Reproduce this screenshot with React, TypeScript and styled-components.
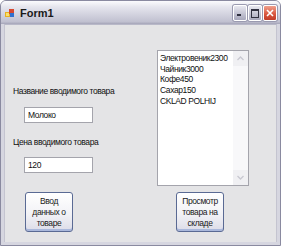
import styled, { createGlobalStyle } from 'styled-components';

const GlobalStyle = createGlobalStyle`
  html, body {
    margin: 0;
    padding: 0;
    background: #ffffff;
  }
  body {
    font-family: "Liberation Sans", Arial, sans-serif;
  }
`;

const Window = styled.div`
  width: 281px;
  height: 246px;
  box-sizing: border-box;
  display: flex;
  flex-direction: column;
  background: #d6d6e0;
  border: 1px solid #8a8aa0;
  border-radius: 6px 6px 0 0;
  overflow: hidden;
`;

const TitleBar = styled.div`
  height: 23px;
  flex: none;
  display: flex;
  align-items: center;
  padding: 0 3px 0 4px;
  background: linear-gradient(
    to bottom,
    #fbfbfd 0%,
    #e6e6ee 25%,
    #d2d2de 60%,
    #c0c0d0 90%,
    #a4a4b8 100%
  );
`;

const Title = styled.span`
  margin-left: 5px;
  font-size: 11px;
  font-weight: bold;
  color: #1a1a1a;
  flex: 1;
`;

const CaptionButtons = styled.div`
  display: flex;
  gap: 1px;
  margin-top: 1px;
`;

const CaptionButton = styled.div<{ $close?: boolean }>`
  width: 14px;
  height: 16px;
  box-sizing: border-box;
  border: 1px solid #ffffff;
  border-radius: 2px;
  display: flex;
  align-items: center;
  justify-content: center;
  background: ${(p) =>
    p.$close
      ? 'linear-gradient(to bottom, #f0a08c, #d8543c 60%, #c03c28)'
      : 'linear-gradient(to bottom, #e8e8f0, #c0c0d0 60%, #a8a8bc)'};
  box-shadow: 0 0 0 1px #9a9ab0;
`;

const Client = styled.div`
  flex: 1;
  display: flex;
  margin: 0 3px 3px 3px;
  background: #e4e4e6;
  border-top: 1px solid #b8b8c8;
  border-left: 1px solid #c4c4d0;
  border-right: 1px solid #c4c4d0;
`;

const LeftColumn = styled.div`
  width: 152px;
  display: flex;
  flex-direction: column;
  align-items: flex-start;
  padding-top: 61px;
`;

const RightColumn = styled.div`
  display: flex;
  flex-direction: column;
  align-items: flex-start;
  padding-top: 25px;
`;

const Label = styled.div<{ $gap: number }>`
  margin-left: 8px;
  margin-top: ${(p) => p.$gap}px;
  font-size: 8.5px;
  line-height: 11px;
  letter-spacing: -0.4px;
  color: #101010;
`;

const TextBox = styled.div<{ $gap: number }>`
  margin-left: 19px;
  margin-top: ${(p) => p.$gap}px;
  width: 69px;
  height: 16px;
  box-sizing: border-box;
  background: #ffffff;
  border: 1px solid #a4a4ac;
  padding: 0 3px;
  font-size: 8.5px;
  line-height: 14px;
  letter-spacing: -0.4px;
  color: #101010;
`;

const PushButton = styled.div<{ $indent: number; $gap: number }>`
  margin-left: ${(p) => p.$indent}px;
  margin-top: ${(p) => p.$gap}px;
  width: 48px;
  height: 40px;
  box-sizing: border-box;
  border: 1px solid #5a6a94;
  border-radius: 3px;
  background: linear-gradient(to bottom, #ffffff 0%, #f2f2f6 55%, #dcdce8 100%);
  box-shadow: inset 0 -2px 0 #aab8dc;
  display: flex;
  align-items: center;
  justify-content: center;
  text-align: center;
  font-size: 8.5px;
  line-height: 11px;
  letter-spacing: -0.4px;
  color: #202020;
`;

const ListBox = styled.div`
  width: 92px;
  height: 136px;
  box-sizing: border-box;
  background: #ffffff;
  border: 1px solid #a4a4ac;
  display: flex;
`;

const ListItems = styled.div`
  flex: 1;
  padding: 2px 0 0 2px;
  font-size: 8.5px;
  line-height: 10.7px;
  letter-spacing: -0.4px;
  color: #101010;
  white-space: nowrap;
  overflow: hidden;
`;

const ScrollBar = styled.div`
  width: 15px;
  display: flex;
  flex-direction: column;
  background: #f6f6f8;
`;

const ScrollArrow = styled.div`
  height: 15px;
  display: flex;
  align-items: center;
  justify-content: center;
  background: #f0f0f3;
`;

const ScrollTrack = styled.div`
  flex: 1;
  background: #f8f8fa;
`;

const FormIcon = () => (
  <svg width="10" height="10" viewBox="0 0 10 10">
    <rect x="0" y="4" width="5" height="5" fill="#e8b020" />
    <rect x="4" y="1" width="5" height="5" fill="#d84830" />
    <rect x="5" y="5" width="4" height="4" fill="#3070d0" />
    <rect x="1" y="5" width="3" height="3" fill="#f8e070" />
  </svg>
);

const Chevron = ({ up }: { up?: boolean }) => (
  <svg width="7" height="5" viewBox="0 0 7 5">
    <path
      d={up ? 'M0.5 4L3.5 1L6.5 4' : 'M0.5 1L3.5 4L6.5 1'}
      fill="none"
      stroke="#c8c8d0"
      strokeWidth="1.3"
    />
  </svg>
);

const items = ['Электровеник2300', 'Чайник3000', 'Кофе450', 'Сахар150', 'CKLAD POLHIJ'];

export default function App() {
  return (
    <>
      <GlobalStyle />
      <Window>
        <TitleBar>
          <FormIcon />
          <Title>Form1</Title>
          <CaptionButtons>
            <CaptionButton>
              <svg width="8" height="8" viewBox="0 0 8 8">
                <rect x="1" y="5" width="4" height="2" fill="#303040" />
              </svg>
            </CaptionButton>
            <CaptionButton>
              <svg width="8" height="9" viewBox="0 0 8 9">
                <rect x="0.5" y="0.5" width="7" height="8" fill="none" stroke="#303040" />
                <rect x="0.5" y="0.5" width="7" height="1.5" fill="#303040" />
              </svg>
            </CaptionButton>
            <CaptionButton $close>
              <svg width="8" height="8" viewBox="0 0 8 8">
                <path d="M1 1L7 7M7 1L1 7" stroke="#ffffff" strokeWidth="1.6" />
              </svg>
            </CaptionButton>
          </CaptionButtons>
        </TitleBar>
        <Client>
          <LeftColumn>
            <Label $gap={0}>Название вводимого товара</Label>
            <TextBox $gap={10}>Молоко</TextBox>
            <Label $gap={14}>Цена вводимого товара</Label>
            <TextBox $gap={9}>120</TextBox>
            <PushButton $indent={20} $gap={19}>
              Ввод
              <br />
              данных о
              <br />
              товаре
            </PushButton>
          </LeftColumn>
          <RightColumn>
            <ListBox>
              <ListItems>
                {items.map((it) => (
                  <div key={it}>{it}</div>
                ))}
              </ListItems>
              <ScrollBar>
                <ScrollArrow>
                  <Chevron up />
                </ScrollArrow>
                <ScrollTrack />
                <ScrollArrow>
                  <Chevron />
                </ScrollArrow>
              </ScrollBar>
            </ListBox>
            <PushButton $indent={19} $gap={6}>
              Просмотр
              <br />
              товара на
              <br />
              складе
            </PushButton>
          </RightColumn>
        </Client>
      </Window>
    </>
  );
}
